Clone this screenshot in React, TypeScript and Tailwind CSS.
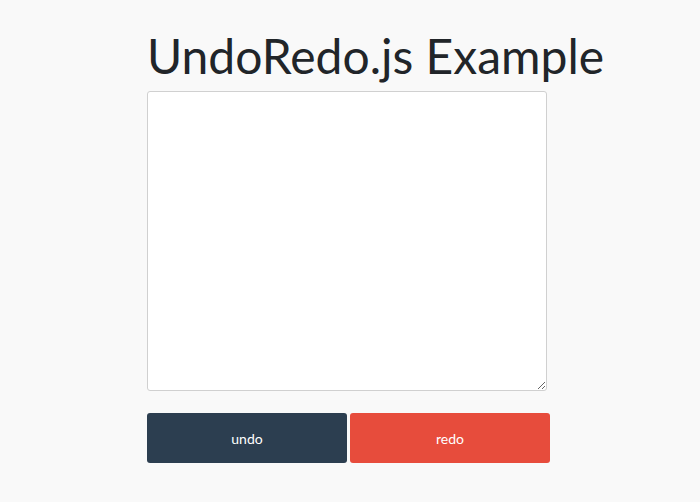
import { useState } from 'react';

const App = () => {
  const [text, setText] = useState('');

  return (
    <div className="min-h-screen bg-[#f9f9f9] font-['Lato',sans-serif] text-[#212529]">
      <div className="pl-[147px] pt-[26px]">
        <h1 className="text-[48px] leading-[60px] font-normal m-0">UndoRedo.js Example</h1>
        <textarea
          className="block mt-[5px] w-[400px] h-[300px] bg-white border border-[#d0d0d0] rounded-[3px] outline-none p-2"
          value={text}
          onChange={e => setText(e.target.value)}
        />
        <div className="flex gap-[3px] mt-[22px]">
          <button className="w-[200px] h-[50px] rounded-[3px] bg-[#2c3e50] text-white text-[14px]">undo</button>
          <button className="w-[200px] h-[50px] rounded-[3px] bg-[#e74c3c] text-white text-[14px]">redo</button>
        </div>
      </div>
    </div>
  );
};

export default App;
